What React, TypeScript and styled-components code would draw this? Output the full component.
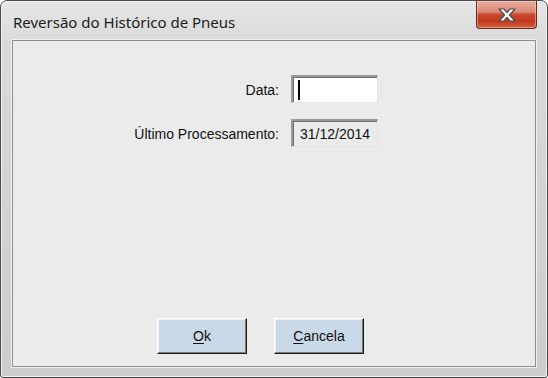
import * as React from 'react';
import styled, { createGlobalStyle } from 'styled-components';

const GlobalStyle = createGlobalStyle`
    html, body {
        margin: 0;
        padding: 0;
        background: #ffffff;
    }
    body {
        font-family: "Liberation Sans", Arial, sans-serif;
    }
`;

const App: React.FC = () => {
    return (
        <>
            <GlobalStyle />
            <StyledWindow>
                <StyledTitleBar>
                    <StyledTitle>Reversão do Histórico de Pneus</StyledTitle>
                    <StyledCloseButton aria-label="Fechar">
                        <svg width="22" height="16" viewBox="0 0 22 16">
                            <path
                                d="M3 2 H8 L11 5.5 L14 2 H19 L13.5 8 L19 14 H14 L11 10.5 L8 14 H3 L8.5 8 Z"
                                fill="#ffffff"
                                stroke="#4b4b4b"
                                strokeWidth="1.2"
                                strokeLinejoin="round"
                            />
                        </svg>
                    </StyledCloseButton>
                </StyledTitleBar>

                <StyledClient>
                    <StyledForm>
                        <StyledLabel>Data:</StyledLabel>
                        <StyledField>
                            <StyledCaret />
                        </StyledField>

                        <StyledLabel>Último Processamento:</StyledLabel>
                        <StyledField readOnly>31/12/2014</StyledField>
                    </StyledForm>

                    <StyledButtonRow>
                        <StyledButton>
                            <u>O</u>k
                        </StyledButton>
                        <StyledButton>
                            <u>C</u>ancela
                        </StyledButton>
                    </StyledButtonRow>
                </StyledClient>
            </StyledWindow>
        </>
    );
};

const StyledWindow = styled.div`
    box-sizing: border-box;
    width: 548px;
    height: 378px;
    display: flex;
    flex-direction: column;
    padding: 0 11px 10px 11px;
    border: 1px solid #4a4a4a;
    border-radius: 7px 7px 3px 3px;
    background: linear-gradient(180deg, #e6e6e6 0%, #d9d9d9 12%, #cccccc 100%);
    box-shadow: inset 1px 1px 0 #f4f4f4, inset -1px -1px 0 #f0f0f0;
`;

const StyledTitleBar = styled.div`
    height: 39px;
    display: flex;
    align-items: flex-start;
    justify-content: space-between;
    flex-shrink: 0;
`;

const StyledTitle = styled.span`
    margin-top: 11px;
    margin-left: 1px;
    font-family: "Noto Sans", "Open Sans", sans-serif;
    font-size: 15px;
    color: #1b1b1b;
`;

const StyledCloseButton = styled.div`
    width: 61px;
    height: 28px;
    margin-right: -1px;
    display: flex;
    align-items: center;
    justify-content: center;
    box-sizing: border-box;
    border: 1px solid #6a2a20;
    border-top: none;
    border-radius: 0 0 4px 4px;
    background: linear-gradient(
        180deg,
        #e9ab9d 0%,
        #dc8a78 40%,
        #c64a30 50%,
        #c2391f 75%,
        #d4623f 100%
    );
    box-shadow: inset 0 0 0 1px rgba(255, 220, 210, 0.45);
`;

const StyledClient = styled.div`
    flex: 1;
    display: flex;
    flex-direction: column;
    background: #ebebeb;
    border: 1px solid #8f8f8f;
    box-shadow: 0 0 0 1px #f2f2f2;
`;

const StyledForm = styled.div`
    display: grid;
    grid-template-columns: 266px 87px;
    column-gap: 12px;
    row-gap: 16px;
    align-items: center;
    padding-top: 34px;
`;

const StyledLabel = styled.span`
    justify-self: end;
    margin-top: 2px;
    font-size: 14px;
    color: #111111;
`;

const StyledField = styled.div<{ readOnly?: boolean }>`
    box-sizing: border-box;
    height: 28px;
    display: flex;
    align-items: center;
    padding-left: ${(props) => (props.readOnly ? '7px' : '5px')};
    font-size: 14px;
    color: #111111;
    background: ${(props) => (props.readOnly ? '#ebebeb' : '#ffffff')};
    border-top: 2px solid #9a9a9a;
    border-left: 2px solid #9a9a9a;
    border-right: 1px solid #e4e4e4;
    border-bottom: 1px solid #e4e4e4;
    box-shadow: inset 1px 1px 0 #6e6e6e;
`;

const StyledCaret = styled.span`
    width: 2px;
    height: 20px;
    background: #000000;
`;

const StyledButtonRow = styled.div`
    margin-top: auto;
    display: flex;
    gap: 27px;
    padding-left: 144px;
    padding-bottom: 12px;
`;

const StyledButton = styled.div`
    box-sizing: border-box;
    width: 90px;
    height: 36px;
    display: flex;
    align-items: center;
    justify-content: center;
    font-size: 14px;
    color: #111111;
    background: #cad9e8;
    border-top: 1px solid #ffffff;
    border-left: 1px solid #ffffff;
    border-right: 1px solid #1a1a1a;
    border-bottom: 1px solid #1a1a1a;
    box-shadow: inset -1px -1px 0 #7a7a7a, inset 1px 1px 0 #e8eef5;

    u {
        text-decoration-thickness: 1px;
        text-underline-offset: 2px;
    }
`;

export default App;
